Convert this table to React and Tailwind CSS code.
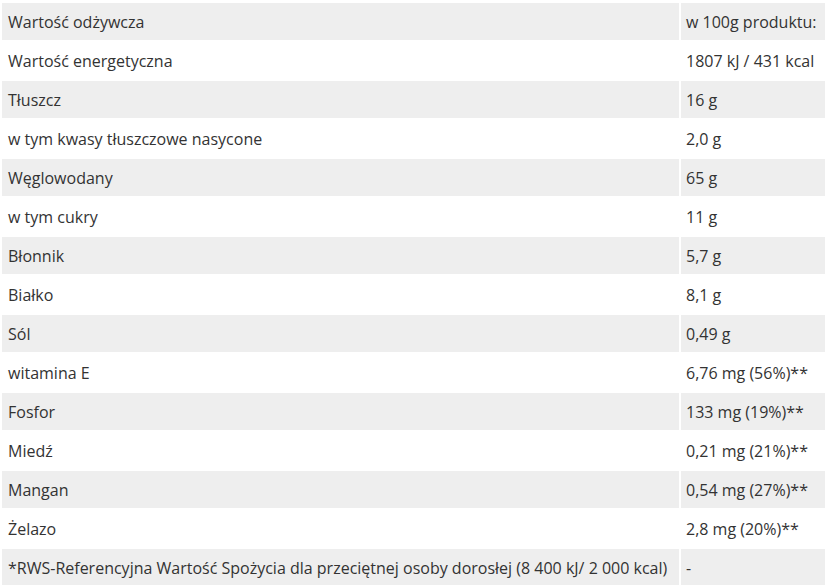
import React from "react";

const rows = [
  ["Wartość odżywcza", "w 100g produktu:"],
  ["Wartość energetyczna", "1807 kJ / 431 kcal"],
  ["Tłuszcz", "16 g"],
  ["w tym kwasy tłuszczowe nasycone", "2,0 g"],
  ["Węglowodany", "65 g"],
  ["w tym cukry", "11 g"],
  ["Błonnik", "5,7 g"],
  ["Białko", "8,1 g"],
  ["Sól", "0,49 g"],
  ["witamina E", "6,76 mg (56%)**"],
  ["Fosfor", "133 mg (19%)**"],
  ["Miedź", "0,21 mg (21%)**"],
  ["Mangan", "0,54 mg (27%)**"],
  ["Żelazo", "2,8 mg (20%)**"],
  ["*RWS-Referencyjna Wartość Spożycia dla przeciętnej osoby dorosłej (8 400 kJ/ 2 000 kcal)", "-"],
];

export default function App() {
  return (
    <div className="w-[825px] h-[585px] overflow-hidden bg-white">
      <div className="w-[829px] pt-[3px] pl-[2px] flex flex-col gap-[2px] font-['Open_Sans',sans-serif] text-[16px] text-[#333333]">
        {rows.map(([a, b], i) => (
          <div key={i} className="flex gap-[2px] h-[37px]">
            <div className={`w-[677px] shrink-0 flex items-center pl-[6px] whitespace-nowrap ${i % 2 === 0 ? "bg-[#eeeeee]" : "bg-white"}`}>
              {a}
            </div>
            <div className={`flex-1 flex items-center pl-[5px] whitespace-nowrap ${i % 2 === 0 ? "bg-[#eeeeee]" : "bg-white"}`}>
              {b}
            </div>
          </div>
        ))}
      </div>
    </div>
  );
}
